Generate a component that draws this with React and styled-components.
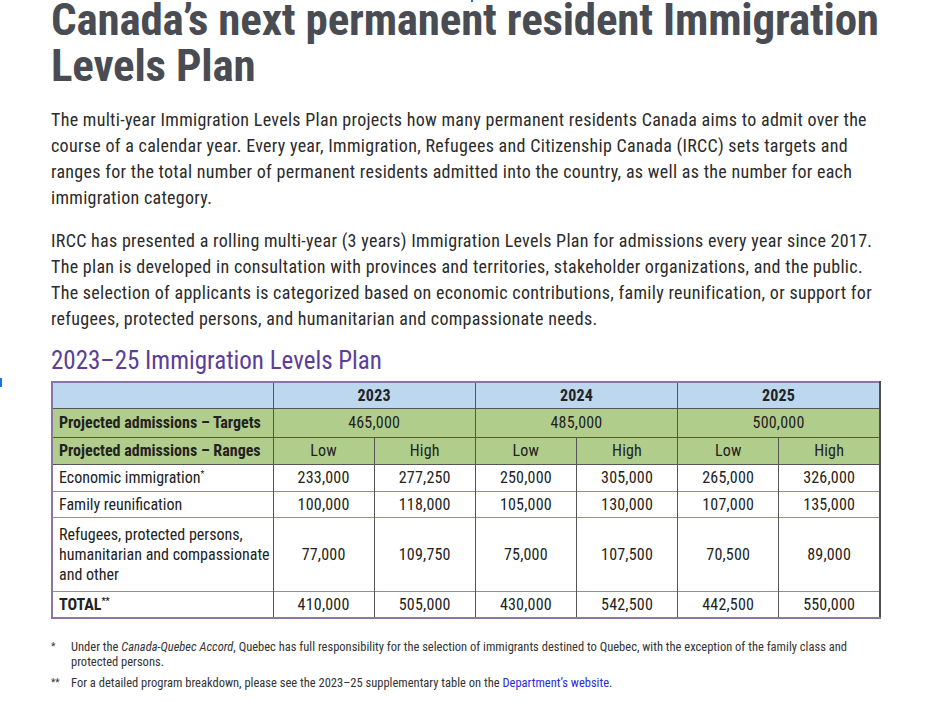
import { Fragment } from "react";
import styled, { createGlobalStyle } from "styled-components";

const CONDENSED = `"Roboto Condensed", "Liberation Sans Narrow", "DejaVu Sans Condensed", "Liberation Sans", sans-serif`;

const GlobalStyle = createGlobalStyle`
  html, body {
    margin: 0;
    padding: 0;
    background: #ffffff;
  }

  body {
    font-family: ${CONDENSED};
    color: #2a2a2a;
  }
`;

const Page = styled.div`
  position: relative;
  width: 933px;
  height: 703px;
  overflow: hidden;
  padding: 0 52px 0 51px;
  box-sizing: border-box;
`;

const Title = styled.h1`
  margin: -3px 0 0;
  font-size: 45px;
  line-height: 46px;
  font-weight: 700;
  color: #4a4c53;
  letter-spacing: -0.2px;
`;

const Paragraph = styled.p`
  margin: ${(props) => props.first ? "18px" : "17px"} 0 0;
  font-size: 18px;
  line-height: 26px;
  letter-spacing: 0.3px;
  color: #2b2b2b;
`;

const Subtitle = styled.h2`
  margin: 14px 0 0;
  font-size: 25px;
  line-height: 30px;
  font-weight: 400;
  color: #5b3d9a;
`;

const Table = styled.table`
  margin-top: 5px;
  width: 830px;
  border-collapse: collapse;
  table-layout: fixed;
  font-size: 16px;
  letter-spacing: 0.2px;
  border-top: 2px solid #8a74a8;
  border-left: 2px solid #8a74a8;
  border-bottom: 2px solid #8a74a8;
  border-right: 2px solid #4f4f4f;
`;

const Row = styled.tr`
  background: ${(props) => props.bg || "#ffffff"};
  border-bottom: 1px solid ${(props) => props.line || "#9b86b8"};
`;

const Cell = styled.td`
  height: ${(props) => props.h || 25}px;
  padding: ${(props) => props.left ? "0 2px 0 6px" : "0 6px"};
  border-left: 1px solid #555555;
  text-align: ${(props) => props.left ? "left" : "center"};
  font-weight: ${(props) => props.bold ? 700 : 400};
  letter-spacing: ${(props) => props.left ? "0" : "0.2px"};
  line-height: 20px;
  color: #222222;
  vertical-align: middle;

  &:first-child {
    border-left: none;
  }
`;

const Sup = styled.sup`
  font-size: 9px;
  line-height: 0;
  vertical-align: 6px;
`;

const Notes = styled.div`
  margin-top: 20px;
  font-size: 12.5px;
  line-height: 15px;
  color: #333333;
`;

const Note = styled.div`
  display: grid;
  grid-template-columns: 20px 1fr;
  margin-bottom: ${(props) => props.gap || 0}px;
  padding-right: 18px;
`;

const Mark = styled.span`
  font-size: 10px;
`;

const Link = styled.a`
  color: #2b2bd6;
  text-decoration: none;
`;

const Blip = styled.span`
  position: absolute;
  left: ${(props) => props.x}px;
  top: ${(props) => props.y}px;
  width: ${(props) => props.w}px;
  height: ${(props) => props.h}px;
  background: #1a73e8;
`;

const YEARS = [
  { year: "2023", target: "465,000" },
  { year: "2024", target: "485,000" },
  { year: "2025", target: "500,000" },
];

const ROWS = [
  { label: "Economic immigration", mark: "*", values: ["233,000", "277,250", "250,000", "305,000", "265,000", "326,000"], h: 26 },
  { label: "Family reunification", values: ["100,000", "118,000", "105,000", "130,000", "107,000", "135,000"], h: 25 },
  { label: "Refugees, protected persons, humanitarian and compassionate and other", values: ["77,000", "109,750", "75,000", "107,500", "70,500", "89,000"], h: 73 },
];

const TOTAL = ["410,000", "505,000", "430,000", "542,500", "442,500", "550,000"];

function App() {
  return (
    <Fragment>
      <GlobalStyle />
      <Page>
        <Blip x={471} y={0} w={2} h={2} />
        <Blip x={0} y={378} w={2} h={9} />

        <Title>Canada’s next permanent resident Immigration Levels Plan</Title>

        <Paragraph first>
          The multi-year Immigration Levels Plan projects how many permanent residents Canada aims to admit over the
          course of a calendar year. Every year, Immigration, Refugees and Citizenship Canada (IRCC) sets targets and
          ranges for the total number of permanent residents admitted into the country, as well as the number for each
          immigration category.
        </Paragraph>
        <Paragraph>
          IRCC has presented a rolling multi-year (3 years) Immigration Levels Plan for admissions every year since 2017.
          The plan is developed in consultation with provinces and territories, stakeholder organizations, and the public.
          The selection of applicants is categorized based on economic contributions, family reunification, or support for
          refugees, protected persons, and humanitarian and compassionate needs.
        </Paragraph>

        <Subtitle>2023–25 Immigration Levels Plan</Subtitle>

        <Table>
          <colgroup>
            <col style={{ width: 221 }} />
            {[0, 1, 2, 3, 4, 5].map((i) => <col key={i} />)}
          </colgroup>
          <tbody>
            <Row bg="#bdd7ee" line="#555555">
              <Cell h={24} />
              {YEARS.map((y) => (
                <Cell key={y.year} colSpan={2} bold>{y.year}</Cell>
              ))}
            </Row>
            <Row bg="#b1cd8b" line="#555555">
              <Cell h={28} left bold>Projected admissions – Targets</Cell>
              {YEARS.map((y) => (
                <Cell key={y.year} colSpan={2}>{y.target}</Cell>
              ))}
            </Row>
            <Row bg="#b1cd8b" line="#555555">
              <Cell h={26} left bold>Projected admissions – Ranges</Cell>
              {YEARS.map((y) => (
                <Fragment key={y.year}>
                  <Cell>Low</Cell>
                  <Cell>High</Cell>
                </Fragment>
              ))}
            </Row>
            {ROWS.map((row) => (
              <Row key={row.label}>
                <Cell h={row.h} left>
                  {row.label}
                  {row.mark && <Sup>{row.mark}</Sup>}
                </Cell>
                {row.values.map((v, i) => (
                  <Cell key={i}>{v}</Cell>
                ))}
              </Row>
            ))}
            <Row>
              <Cell h={25} left bold>TOTAL<Sup>**</Sup></Cell>
              {TOTAL.map((v, i) => (
                <Cell key={i}>{v}</Cell>
              ))}
            </Row>
          </tbody>
        </Table>

        <Notes>
          <Note gap={6}>
            <Mark>*</Mark>
            <span>
              Under the <em>Canada-Quebec Accord</em>, Quebec has full responsibility for the selection of immigrants destined to Quebec, with the exception of the family class and protected persons.
            </span>
          </Note>
          <Note>
            <Mark>**</Mark>
            <span>
              For a detailed program breakdown, please see the 2023–25 supplementary table on the <Link href="#">Department’s website</Link>.
            </span>
          </Note>
        </Notes>
      </Page>
    </Fragment>
  );
}

export default App;
